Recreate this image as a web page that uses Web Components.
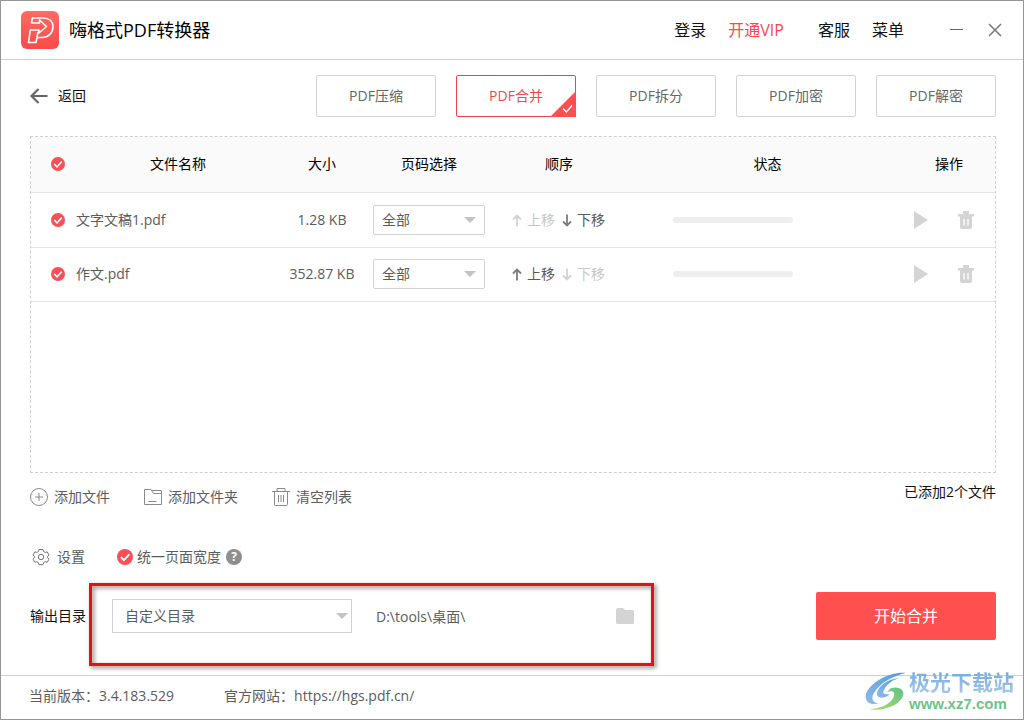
<!DOCTYPE html>
<html lang="zh-CN">
<head>
<meta charset="utf-8">
<meta name="viewport" content="width=device-width, initial-scale=1">
<title>嗨格式PDF转换器</title>
<style>
  html, body { margin: 0; height: 100%; }
  body { font-family: "Open Sans", "Noto Sans CJK SC", sans-serif; font-size: 14px; line-height: 20px; color: #5c5c5c; background: #fff; }
</style>
</head>
<body>
<hg-app></hg-app>
<script>
const BASE = `
  *, *::before, *::after { box-sizing: border-box; }
  button, input, select { font: inherit; color: inherit; margin: 0; padding: 0; border: 0; background: none; border-radius: 0; }
  button { display: flex; align-items: center; cursor: pointer; }
  a { color: inherit; text-decoration: none; }
`;

function define(name, css, html, setup) {
  customElements.define(name, class extends HTMLElement {
    constructor() {
      super();
      this.attachShadow({ mode: 'open' });
    }
    connectedCallback() {
      const t = document.createElement('template');
      t.innerHTML = `<style>${BASE}${css}</style>${typeof html === 'function' ? html(this) : html}`;
      this.shadowRoot.replaceChildren(t.content.cloneNode(true));
      if (setup) setup(this);
    }
  });
}

const ICONS = {
  logo: [38, 38, `<defs><linearGradient id="g" x1="0" y1="0" x2="0" y2="1"><stop offset="0" stop-color="#ff6a62"/><stop offset="1" stop-color="#fb4a4a"/></linearGradient></defs>
    <rect width="38" height="38" rx="6" fill="url(#g)"/>
    <path d="M10.500 12L11.300 7H22C28.500 7 32 10.500 32 15.500C32 22 27.500 26.500 21 26.500H16L15 31.500H7.500L9.300 19H18V22L25.500 15.500L18.500 9V12ZM16 26.500L16.800 21.500" fill="none" stroke="#fff" stroke-width="1.600" stroke-linejoin="round" stroke-linecap="round"/>`],
  back: [18, 16, `<path d="M17.500 8H2M8.500 1L1.500 8L8.500 15" fill="none" stroke="#666" stroke-width="2.200"/>`],
  min: [14, 14, `<path d="M0 6.500H13" stroke="#666" stroke-width="1"/>`],
  close: [14, 14, `<path d="M1 1L13 13M13 1L1 13" stroke="#777" stroke-width="1.500"/>`],
  check: [16, 16, `<circle cx="8" cy="8" r="8" fill="#f94f55"/><path d="M3.800 8L6.900 11.200L12.300 5.300" fill="none" stroke="#fff" stroke-width="1.800"/>`],
  corner: [26, 26, `<path d="M26 0V26H0Z" fill="#ff4f4f"/><path d="M13 17.500L16.500 21L22 14.500" fill="none" stroke="#fff" stroke-width="1.500"/>`],
  caret: [12, 6, `<path d="M0 0H12L6 6Z" fill="#c4c4c4"/>`],
  up: [10, 13, `<path d="M5 12.500V2M1 5.500L5 1.500L9 5.500" fill="none" stroke="currentColor" stroke-width="1.800"/>`],
  down: [10, 13, `<path d="M5 0.500V11M1 7.500L5 11.500L9 7.500" fill="none" stroke="currentColor" stroke-width="1.800"/>`],
  play: [14, 18, `<path d="M0 0L14 9L0 18Z" fill="#d4d4d4"/>`],
  bin: [16, 18, `<path d="M5 0H11V3H16V5.500H14V16Q14 18 12 18H4Q2 18 2 16V5.500H0V3H5Z" fill="#d4d4d4"/><path d="M6 8V14.500M10 8V14.500" stroke="#fff" stroke-width="1.300"/>`],
  add: [18, 18, `<circle cx="9" cy="9" r="8.500" fill="none" stroke="#8a8a8a"/><path d="M9 5V13M5 9H13" stroke="#8a8a8a"/>`],
  folder: [18, 16, `<path d="M0.500 15.500V0.500H7L9.500 4.500H17.500V15.500ZM8 1.500H17.500V4.500M4.500 12.500H12.500" fill="none" stroke="#8a8a8a"/>`],
  clear: [18, 18, `<path d="M0 3.500H18M5 3.500V0.500H13V3.500M2.500 3.500V16.500Q2.500 17.500 3.500 17.500H14.500Q15.500 17.500 15.500 16.500V3.500M6.500 7V14M9 7V14M11.500 7V14" fill="none" stroke="#8a8a8a"/>`],
  gear: [18, 18, `<path d="M7 1.500H11L11.600 3.500L13.200 4.400L15.200 3.900L17 7L15.600 8.300V9.900L17 11.200L15.200 14.300L13.200 13.700L11.600 14.600L11 16.600H7L6.400 14.600L4.800 13.700L2.800 14.300L1 11.200L2.400 9.900V8.300L1 7L2.800 3.900L4.800 4.400L6.400 3.500Z" fill="none" stroke="#777" stroke-linejoin="round"/><circle cx="9" cy="9" r="2.700" fill="none" stroke="#777"/>`],
  open: [18, 16, `<path d="M0 2Q0 0 2 0H7L9 2H16.500Q18 2 18 3.500V14.500Q18 16 16.500 16H1.500Q0 16 0 14.500Z" fill="#d4d4d4"/>`],
  swirl: [42, 40, `<defs><linearGradient id="b" x1="0" y1="1" x2="1" y2="0"><stop offset="0" stop-color="#8fbbe6"/><stop offset="1" stop-color="#4f9be0"/></linearGradient><linearGradient id="n" x1="0" y1="1" x2="1" y2="0"><stop offset="0" stop-color="#b5d86a"/><stop offset="1" stop-color="#5cc487"/></linearGradient></defs>
    <path d="M41 1C26 -1 5 10 1 22C-1 30 6 34 14 31C7 31 6 26 9 21C14 12 27 4 41 1Z" fill="url(#b)"/>
    <path d="M34 6C23 7 13 14 12 21C11 27 20 27 25 22C20 23 17 22 19 18C21 13 27 8 34 6Z" fill="url(#b)"/>
    <path d="M26 16C35 14 40 18 38 24C35 33 18 40 4 37C16 37 27 31 29 24C30 20 28 18 22 20Z" fill="url(#n)"/>`]
};

define('hg-icon', `:host { display: inline-flex; flex: none; } svg { display: block; }`,
  el => {
    const [w, h, body] = ICONS[el.getAttribute('name')];
    const s = Number(el.getAttribute('size')) || w;
    return `<svg width="${s}" height="${Math.round(h * s / w)}" viewBox="0 0 ${w} ${h}" aria-hidden="true">${body}</svg>`;
  });

define('hg-check', `
  :host { display: flex; }
  label { display: flex; align-items: center; gap: 4px; }
  .box { display: grid; flex: none; }
  input, hg-icon { grid-area: 1 / 1; }
  input { appearance: none; width: 100%; height: 100%; border: 1px solid #c4c4c4; border-radius: 50%; }
  input:checked { border-color: transparent; }
  input:not(:checked) + hg-icon { visibility: hidden; }
  hg-icon { pointer-events: none; }`,
  el => `<label><span class="box"><input type="checkbox" checked${el.hasAttribute('label') ? ` aria-label="${el.getAttribute('label')}"` : ''}><hg-icon name="check" size="${el.getAttribute('size') || 14}"></hg-icon></span><slot></slot></label>`);

const SELECT = `
  .select { display: grid; align-items: center; }
  .select select, .select hg-icon { grid-area: 1 / 1; }
  .select select { appearance: none; width: 100%; border: 1px solid #d2d2d2; background: #fff; }
  .select hg-icon { justify-self: end; pointer-events: none; }`;

define('hg-page-select', `${SELECT}
  :host { display: block; }
  select { height: 30px; padding: 0 8px; border-radius: 2px; }
  .select hg-icon { margin-right: 9px; }`,
  `<div class="select"><select aria-label="页码选择"><option>全部</option><option>自定义</option></select><hg-icon name="caret"></hg-icon></div>`);

define('hg-titlebar', `
  :host { display: flex; align-items: center; height: 59px; padding: 0 21px 0 20px; border-bottom: 1px solid #cfcfcf; color: #111; }
  h1 { margin: 0 auto 0 10px; font-size: 18px; line-height: 24px; font-weight: 400; color: #000; }
  nav { display: flex; gap: 22px; font-size: 16px; line-height: 24px; }
  .vip { color: #f9484d; margin-right: 12px; }
  .win { display: flex; gap: 24px; margin-left: 46px; }`,
  `<hg-icon name="logo"></hg-icon><h1>嗨格式PDF转换器</h1>
   <nav><a href="#login">登录</a><a class="vip" href="#vip">开通VIP</a><a href="#service">客服</a><a href="#menu">菜单</a></nav>
   <div class="win"><button aria-label="最小化"><hg-icon name="min"></hg-icon></button><button aria-label="关闭"><hg-icon name="close"></hg-icon></button></div>`);

define('hg-tab', `
  :host { display: block; width: 120px; }
  button { position: relative; width: 100%; height: 42px; justify-content: center; border: 1px solid #d2d2d2; border-radius: 2px; background: #fff; color: #666; }
  hg-icon { display: none; position: absolute; right: -1px; bottom: -1px; }
  :host([active]) button { border-color: #e8454b; color: #f0484e; }
  :host([active]) hg-icon { display: block; }`,
  `<button><slot></slot><hg-icon name="corner"></hg-icon></button>`);

define('hg-toolbar', `
  :host { display: flex; align-items: center; justify-content: space-between; gap: 20px; }
  .back { gap: 10px; color: #111; }
  nav { display: flex; gap: 20px; }`,
  `<button class="back"><hg-icon name="back"></hg-icon>返回</button>
   <nav><hg-tab>PDF压缩</hg-tab><hg-tab active>PDF合并</hg-tab><hg-tab>PDF拆分</hg-tab><hg-tab>PDF加密</hg-tab><hg-tab>PDF解密</hg-tab></nav>`);

const FILES = [
  { name: '文字文稿1.pdf', size: '1.28 KB', up: false, down: true },
  { name: '作文.pdf', size: '352.87 KB', up: true, down: false }
];

define('hg-file-table', `
  :host { display: block; border: 1px dashed #cfcfcf; }
  table { width: 100%; table-layout: fixed; border-collapse: separate; border-spacing: 0; }
  col.c-pick { width: 45px; } col.c-name { width: 204px; } col.c-size { width: 84px; }
  col.c-pages { width: 130px; } col.c-order { width: 130px; } col.c-ops { width: 84px; }
  th, td { padding: 0; border-bottom: 1px solid #e4e4e4; text-align: center; }
  th { height: 56px; padding-bottom: 2px; background: #fafafa; color: #000; font-weight: 400; }
  td { height: 54px; padding-bottom: 1px; }
  tbody tr:first-child td { height: 55px; padding-bottom: 0; }
  hg-check { padding-left: 20px; }
  td.name { text-align: left; }
  th.ops { padding-right: 8px; }
  td.pages { padding-left: 9px; padding-right: 9px; text-align: left; }
  .order { display: flex; gap: 7px; padding-left: 18px; }
  .order button { gap: 5px; }
  .order button:disabled { color: #c8c8c8; cursor: default; }
  .order hg-icon { opacity: .8; }
  progress { appearance: none; display: block; width: 120px; height: 6px; margin-left: 49px; border: 0; border-radius: 3px; overflow: hidden; }
  progress::-webkit-progress-bar { background: #eee; }
  .tools { display: flex; gap: 30px; padding-left: 3px; }`,
  () => `<table>
    <colgroup><col class="c-pick"><col class="c-name"><col class="c-size"><col class="c-pages"><col class="c-order"><col><col class="c-ops"></colgroup>
    <thead><tr><th><hg-check label="全选"></hg-check></th><th>文件名称</th><th>大小</th><th>页码选择</th><th>顺序</th><th>状态</th><th class="ops">操作</th></tr></thead>
    <tbody>${FILES.map(f => `<tr>
      <td><hg-check label="选择 ${f.name}"></hg-check></td><td class="name">${f.name}</td><td>${f.size}</td>
      <td class="pages"><hg-page-select></hg-page-select></td>
      <td><div class="order"><button${f.up ? '' : ' disabled'}><hg-icon name="up"></hg-icon>上移</button><button${f.down ? '' : ' disabled'}><hg-icon name="down"></hg-icon>下移</button></div></td>
      <td><progress value="0" max="100" aria-label="状态"></progress></td>
      <td><div class="tools"><button aria-label="开始"><hg-icon name="play"></hg-icon></button><button aria-label="删除"><hg-icon name="bin"></hg-icon></button></div></td>
    </tr>`).join('')}</tbody></table>`);

define('hg-actions', `
  :host { display: flex; gap: 34px; height: 48px; }
  button { gap: 6px; }
  p { margin: 9px 0 0 auto; color: #111; }`,
  `<button><hg-icon name="add"></hg-icon>添加文件</button>
   <button><hg-icon name="folder"></hg-icon>添加文件夹</button>
   <button><hg-icon name="clear"></hg-icon>清空列表</button>
   <p>已添加2个文件</p>`);

define('hg-settings', `
  :host { display: flex; align-items: center; height: 71px; padding-left: 2px; }
  .set { gap: 7px; margin-right: 32px; }
  .help { justify-content: center; width: 16px; height: 16px; margin-left: 5px; border-radius: 50%; background: #8e8e8e; color: #fff; font-size: 12px; line-height: 16px; font-weight: 700; }`,
  `<button class="set"><hg-icon name="gear"></hg-icon>设置</button>
   <hg-check size="16">统一页面宽度</hg-check><button class="help" aria-label="帮助">?</button>`);

define('hg-output', `${SELECT}
  :host { position: relative; display: flex; align-items: center; height: 48px; }
  label { color: #111; margin-right: 26px; }
  .select { width: 240px; }
  select { height: 34px; padding: 0 12px; }
  .select hg-icon { margin-right: 4px; }
  input { width: 216px; height: 34px; margin: 0 24px; }
  .start { justify-content: center; width: 180px; height: 48px; margin-left: auto; border-radius: 2px; background: #ff4f4f; color: #fff; font-size: 16px; }
  .mark { position: absolute; left: 59px; top: -9px; width: 565px; height: 83px; border: 3px solid #e60f14; filter: drop-shadow(2px 2px 2px rgba(40, 50, 30, .6)); pointer-events: none; }`,
  `<label for="dir">输出目录</label>
   <div class="select"><select id="dir"><option>自定义目录</option><option>原文件目录</option></select><hg-icon name="caret"></hg-icon></div>
   <input type="text" value="D:\\tools\\桌面\\" readonly aria-label="输出路径">
   <button aria-label="打开目录"><hg-icon name="open"></hg-icon></button>
   <button class="start">开始合并</button>
   <div class="mark"></div>`);

define('hg-watermark', `
  :host { display: flex; align-items: center; gap: 2px; pointer-events: none; }
  .words { display: grid; }
  .cn { font-size: 21px; line-height: 24px; font-weight: 700; color: transparent; background: linear-gradient(#6fa9dc, #a9c8ea); background-clip: text; -webkit-background-clip: text; }
  .url { font: 700 15px/20px "Liberation Sans", sans-serif; color: #6cc48a; }`,
  `<hg-icon name="swirl"></hg-icon><div class="words"><span class="cn">极光下载站</span><span class="url">www.xz7.com</span></div>`);

define('hg-footer', `
  :host { position: relative; display: flex; align-items: center; gap: 50px; height: 44px; padding: 0 28px 4px; border-top: 1px solid #cfcfcf; box-sizing: border-box; }
  hg-watermark { position: absolute; right: 9px; bottom: 5px; }`,
  `<span>当前版本：3.4.183.529</span><span>官方网站：<a href="https://hgs.pdf.cn/">https://hgs.pdf.cn/</a></span><hg-watermark></hg-watermark>`);

define('hg-app', `
  :host { display: flex; flex-direction: column; min-height: 100%; box-sizing: border-box; border: 1px solid #959595; background: #fff; }
  hg-titlebar { box-sizing: border-box; }
  main { flex: 1; display: flex; flex-direction: column; padding: 15px 27px 35px 29px; }
  hg-file-table { flex: 1; margin-top: 19px; }`,
  `<hg-titlebar></hg-titlebar>
   <main><hg-toolbar></hg-toolbar><hg-file-table></hg-file-table><hg-actions></hg-actions><hg-settings></hg-settings><hg-output></hg-output></main>
   <hg-footer></hg-footer>`);
</script>
</body>
</html>
